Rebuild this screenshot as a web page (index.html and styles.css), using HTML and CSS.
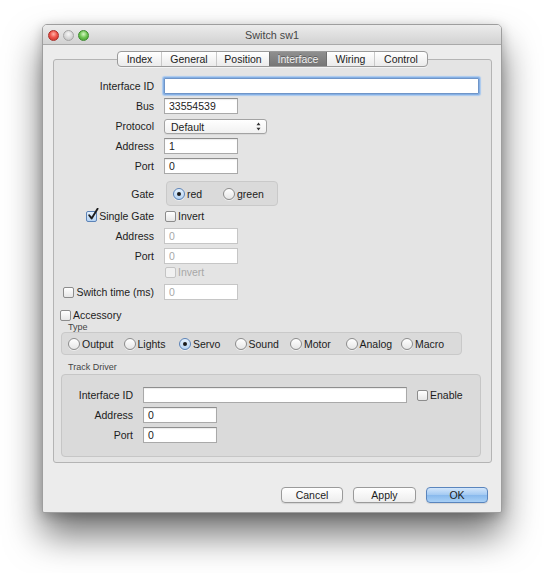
FILE: index.html
```html
<!DOCTYPE html>
<html>
<head>
<meta charset="utf-8">
<title>Switch sw1</title>
<link rel="stylesheet" href="styles.css">
</head>
<body>
<div class="window">
  <div class="titlebar">
    <div class="lights">
      <span class="light red"></span><span class="light gray"></span><span class="light green"></span>
    </div>
    <div class="title">Switch sw1</div>
    <div></div>
  </div>
  <div class="content">
    <div class="tabs">
      <div class="tab t-index">Index</div>
      <div class="tab t-general">General</div>
      <div class="tab t-position">Position</div>
      <div class="tab t-interface selected">Interface</div>
      <div class="tab t-wiring">Wiring</div>
      <div class="tab t-control">Control</div>
    </div>
    <div class="panel">
      <div class="row first">
        <div class="lbl">Interface ID</div>
        <div class="input wide focus"></div>
      </div>
      <div class="row">
        <div class="lbl">Bus</div>
        <div class="input short">33554539</div>
      </div>
      <div class="row">
        <div class="lbl">Protocol</div>
        <div class="popup">
          <span>Default</span>
          <svg class="updown" width="5" height="9" viewBox="0 0 5 9"><path d="M2.5 0.5 L4.5 3.2 L0.5 3.2 Z M2.5 8.5 L4.5 5.8 L0.5 5.8 Z" fill="#333"/></svg>
        </div>
      </div>
      <div class="row">
        <div class="lbl">Address</div>
        <div class="input short">1</div>
      </div>
      <div class="row">
        <div class="lbl">Port</div>
        <div class="input short">0</div>
      </div>
      <div class="row gate-row">
        <div class="lbl">Gate</div>
        <div class="gatebox">
          <div class="radio-item r-red"><span class="radio on"></span><span>red</span></div>
          <div class="radio-item"><span class="radio"></span><span>green</span></div>
        </div>
      </div>
      <div class="row crow single-row">
        <div class="lbl cblbl"><span class="check on"><svg width="12" height="13" viewBox="0 0 12 13"><path d="M2.2 7.2 L4.6 10.4 L10.6 0.8" fill="none" stroke="#1d1d1d" stroke-width="1.9" stroke-linecap="round" stroke-linejoin="round"/></svg></span><span>Single Gate</span></div>
        <div class="cbitem"><span class="check"></span><span>Invert</span></div>
      </div>
      <div class="row dis-addr">
        <div class="lbl">Address</div>
        <div class="input short disabled">0</div>
      </div>
      <div class="row">
        <div class="lbl">Port</div>
        <div class="input short disabled">0</div>
      </div>
      <div class="row crow inv-row">
        <div class="lbl"></div>
        <div class="cbitem disabled"><span class="check"></span><span>Invert</span></div>
      </div>
      <div class="row sw-row">
        <div class="lbl cblbl"><span class="check"></span><span>Switch time (ms)</span></div>
        <div class="input short disabled">0</div>
      </div>
      <div class="row crow acc-row">
        <div class="cbitem"><span class="check"></span><span>Accessory</span></div>
      </div>
      <div class="caption cap-type">Type</div>
      <div class="typebox">
        <div class="radio-item"><span class="radio"></span><span>Output</span></div>
        <div class="radio-item"><span class="radio"></span><span>Lights</span></div>
        <div class="radio-item"><span class="radio on"></span><span>Servo</span></div>
        <div class="radio-item"><span class="radio"></span><span>Sound</span></div>
        <div class="radio-item"><span class="radio"></span><span>Motor</span></div>
        <div class="radio-item"><span class="radio"></span><span>Analog</span></div>
        <div class="radio-item"><span class="radio"></span><span>Macro</span></div>
      </div>
      <div class="caption cap-track">Track Driver</div>
      <div class="trackbox">
        <div class="row first">
          <div class="lbl tlbl">Interface ID</div>
          <div class="input twide"></div>
          <div class="cbitem enable"><span class="check"></span><span>Enable</span></div>
        </div>
        <div class="row">
          <div class="lbl tlbl">Address</div>
          <div class="input short">0</div>
        </div>
        <div class="row">
          <div class="lbl tlbl">Port</div>
          <div class="input short">0</div>
        </div>
      </div>
    </div>
    <div class="buttons">
      <div class="btn b-cancel">Cancel</div>
      <div class="btn b-apply">Apply</div>
      <div class="btn b-ok default">OK</div>
    </div>
  </div>
</div>
</body>
</html>
```
FILE: styles.css
```css
html, body {
  margin: 0;
  padding: 0;
  background: #ffffff;
}
body {
  font-family: "Liberation Sans", Arial, sans-serif;
  font-size: 10.5px;
  color: #1c1c1c;
  min-height: 573px;
  padding-top: 24px;
  box-sizing: border-box;
  overflow: hidden;
}

.window {
  margin: 0 0 0 42px;
  width: 460px;
  box-sizing: border-box;
  border: 1px solid #9e9e9e;
  border-radius: 5px 5px 2px 2px;
  background: #ececec;
  box-shadow: 0 22px 36px rgba(0, 0, 0, 0.55), 0 3px 12px rgba(0, 0, 0, 0.22);
  overflow: hidden;
}

/* title bar */
.titlebar {
  height: 19px;
  border-bottom: 1px solid #a9a9a9;
  background: linear-gradient(#ececec, #d2d2d2);
  display: grid;
  grid-template-columns: 1fr auto 1fr;
  align-items: center;
}
.lights {
  display: flex;
  gap: 4px;
  padding-left: 5px;
  padding-top: 1px;
}
.light {
  width: 11px;
  height: 11px;
  border-radius: 50%;
  box-sizing: border-box;
}
.light.red {
  background: radial-gradient(circle at 50% 35%, #ffb3a8 0, #f0564c 45%, #c12a22 100%);
  border: 1px solid #a8302a;
}
.light.gray {
  background: radial-gradient(circle at 50% 35%, #f6f6f6 0, #d6d6d6 55%, #bdbdbd 100%);
  border: 1px solid #a5a5a5;
}
.light.green {
  background: radial-gradient(circle at 50% 35%, #d4f7c2 0, #6cc34f 50%, #3c962b 100%);
  border: 1px solid #3f8a31;
}
.title {
  font-size: 10.8px;
  color: #464646;
  padding-top: 1px;
}

/* content */
.content {
  padding: 6px 9px 9px 10px;
}

.tabs {
  display: flex;
  width: 311px;
  height: 16px;
  margin: 0 auto;
  position: relative;
  z-index: 1;
  box-sizing: border-box;
  border: 1px solid #9a9a9a;
  border-radius: 4px;
  background: linear-gradient(#ffffff, #ebebeb);
  box-shadow: 0 1px 0 rgba(255, 255, 255, 0.6);
  overflow: hidden;
}
.tab {
  display: flex;
  align-items: center;
  justify-content: center;
  box-sizing: border-box;
  border-left: 1px solid #c9c9c9;
  color: #1c1c1c;
  font-size: 10.5px;
}
.tab:first-child { border-left: none; }
.t-index { width: 43px; }
.t-general { width: 55px; }
.t-position { width: 53px; }
.t-interface { width: 57px; }
.t-wiring { width: 48px; }
.t-control { width: 53px; }
.tab.selected {
  background: linear-gradient(#8f8f8f, #767676);
  color: #f2f2f2;
  border-left-color: #6f6f6f;
  text-shadow: 0 -1px 0 rgba(0, 0, 0, 0.35);
}
.tab.selected + .tab { border-left-color: #6f6f6f; }

.panel {
  margin-top: -8px;
  height: 404px;
  box-sizing: border-box;
  border: 1px solid #b4b4b4;
  border-radius: 3px;
  background: #e4e4e4;
  padding-top: 18px;
  display: flex;
  flex-direction: column;
}

.row {
  display: flex;
  align-items: center;
  height: 16px;
  margin-top: 4px;
  flex: none;
}
.row.first { margin-top: 0; }
.lbl {
  width: 100px;
  margin-right: 10px;
  text-align: right;
  flex: none;
  color: #1c1c1c;
}
.cblbl {
  display: flex;
  justify-content: flex-end;
  align-items: center;
  gap: 2px;
}

/* inputs */
.input {
  height: 16px;
  box-sizing: border-box;
  background: #ffffff;
  border: 1px solid #a9a9a9;
  border-top-color: #8e8e8e;
  box-shadow: inset 0 1px 1px rgba(0, 0, 0, 0.08);
  padding: 0 4px;
  line-height: 14px;
  color: #1c1c1c;
  flex: none;
}
.input.short { width: 74px; }
.input.wide { width: 315px; }
.input.twide { width: 264px; }
.input.focus {
  border-color: #6f95c8;
  box-shadow: 0 0 0 1px #86b0e4, 0 0 1px 2px #a9c9ef;
  border-radius: 1px;
}
.input.disabled {
  border-color: #c6c6c6;
  color: #a8a8a8;
  box-shadow: none;
}

.popup {
  width: 103px;
  height: 15px;
  margin-top: 1px;
  box-sizing: border-box;
  border: 1px solid #a3a3a3;
  border-radius: 3px;
  background: linear-gradient(#ffffff, #f1f1f1);
  box-shadow: 0 1px 0 rgba(0, 0, 0, 0.05);
  display: flex;
  align-items: center;
  justify-content: space-between;
  padding: 0 5px 0 6px;
  flex: none;
}

/* radio and checkbox */
.radio {
  width: 12px;
  height: 12px;
  box-sizing: border-box;
  border-radius: 50%;
  border: 1px solid #8c8c8c;
  background: linear-gradient(#ffffff, #e6e6e6);
  box-shadow: 0 1px 0 rgba(255, 255, 255, 0.5);
  display: flex;
  align-items: center;
  justify-content: center;
  flex: none;
}
.radio.on {
  border-color: #5c83b7;
  background: linear-gradient(#e4f0fc, #b5d3f3);
}
.radio.on::after {
  content: "";
  width: 4px;
  height: 4px;
  border-radius: 50%;
  background: #1a1a1a;
}
.radio-item {
  display: flex;
  align-items: center;
  gap: 2px;
}

.check {
  width: 11px;
  height: 11px;
  box-sizing: border-box;
  border: 1px solid #8c8c8c;
  border-radius: 2px;
  background: linear-gradient(#ffffff, #e6e6e6);
  position: relative;
  flex: none;
}
.check.on {
  border-color: #5c83b7;
  background: linear-gradient(#e4f0fc, #b5d3f3);
}
.check svg {
  position: absolute;
  left: 0;
  top: -4px;
}
.cbitem {
  display: flex;
  align-items: center;
  gap: 2px;
  flex: none;
  margin-left: 1px;
}
.cbitem.disabled { color: #a8a8a8; }
.cbitem.disabled .check { border-color: #c4c4c4; background: #f1f1f1; }

/* specific rows */
.gate-row {
  margin-top: 7px;
  height: 25px;
}
.gatebox {
  margin-left: 2px;
  width: 112px;
  height: 25px;
  box-sizing: border-box;
  border: 1px solid #c9c9c9;
  border-radius: 4px;
  background: #dadada;
  display: flex;
  align-items: center;
  padding-left: 6px;
}
.gatebox .r-red { width: 50px; }

.crow { height: 14px; }
.single-row { margin-top: 3px; }
.dis-addr { margin-top: 5px; }
.inv-row { margin-top: 1px; }
.sw-row { margin-top: 5px; }
.acc-row { margin-top: 8px; padding-left: 5px; }

.caption {
  font-size: 9px;
  line-height: 10px;
  height: 10px;
  color: #454545;
  margin-left: 14px;
  flex: none;
}
.cap-track { margin-top: 7px; }

.typebox {
  margin-left: 7px;
  width: 401px;
  height: 23px;
  box-sizing: border-box;
  border: 1px solid #c9c9c9;
  border-radius: 4px;
  background: #dadada;
  display: grid;
  grid-template-columns: repeat(7, 55.5px);
  align-items: center;
  padding-left: 6px;
  flex: none;
}

.trackbox {
  margin-top: 2px;
  margin-left: 7px;
  width: 420px;
  height: 83px;
  box-sizing: border-box;
  border: 1px solid #c6c6c6;
  border-radius: 4px;
  background: #dadada;
  padding-top: 12px;
  flex: none;
}
.tlbl { width: 71px; }
.enable { margin-left: 10px; }

/* buttons */
.buttons {
  margin-top: 24px;
  display: flex;
  justify-content: flex-end;
  gap: 10px;
  padding-right: 4px;
}
.btn {
  height: 16px;
  box-sizing: border-box;
  border: 1px solid #9a9a9a;
  border-radius: 4px;
  background: linear-gradient(#ffffff, #ededed);
  box-shadow: 0 1px 1px rgba(0, 0, 0, 0.1);
  display: flex;
  align-items: center;
  justify-content: center;
  color: #1c1c1c;
}
.b-cancel { width: 62px; }
.b-apply { width: 63px; }
.b-ok { width: 62px; }
.btn.default {
  border-color: #5a85bd;
  background: linear-gradient(#d3e6fb, #a2c9f2 50%, #88b9ed 51%, #a8d0f6);
}
```
